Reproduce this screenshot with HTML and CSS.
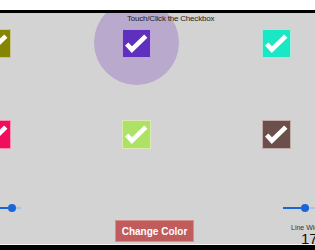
FILE: index.html
```html
<!DOCTYPE html>
<html lang="en">
<head>
    <meta charset="UTF-8">
    <title>Checkbox</title>
    <link rel="stylesheet" href="styles.css">
</head>
<body>
    <div class="topbar"></div>
    <div class="stage">
        <div class="ripple"></div>
        <p class="title">Touch/Click the Checkbox</p>

        <div class="row first">
            <div class="cell"><div class="box olive"><svg viewBox="0 0 29 29"><polyline points="4,15 9.5,21 24.5,6.5"/></svg></div></div>
            <div class="cell"><div class="box purple"><svg viewBox="0 0 29 29"><polyline points="4,15 9.5,21 24.5,6.5"/></svg></div></div>
            <div class="cell"><div class="box teal"><svg viewBox="0 0 29 29"><polyline points="4,15 9.5,21 24.5,6.5"/></svg></div></div>
        </div>

        <div class="row second">
            <div class="cell"><div class="box pink"><svg viewBox="0 0 29 29"><polyline points="4,15 9.5,21 24.5,6.5"/></svg></div></div>
            <div class="cell"><div class="box lime"><svg viewBox="0 0 29 29"><polyline points="4,15 9.5,21 24.5,6.5"/></svg></div></div>
            <div class="cell"><div class="box brown"><svg viewBox="0 0 29 29"><polyline points="4,15 9.5,21 24.5,6.5"/></svg></div></div>
        </div>

        <div class="sliders">
            <div class="slider left">
                <div class="fill"></div>
                <div class="thumb"></div>
                <div class="rest"></div>
            </div>
            <div class="slider right">
                <div class="fill"></div>
                <div class="thumb"></div>
                <div class="rest"></div>
            </div>
        </div>

        <div class="bottom">
            <button id="changeColor">Change Color</button>
            <div class="width-label">
                <span class="small">Line Width</span>
                <span class="value">17</span>
            </div>
        </div>
    </div>
    <div class="footer"></div>
</body>
</html>
```

FILE: styles.css
```css
body {
    margin: 0;
    width: 315px;
    height: 250px;
    overflow: hidden;
    background-color: white;
    font-family: "Liberation Sans", Arial, sans-serif;
}

.topbar {
    height: 10px;
    background-color: white;
    border-bottom: 3px solid black;
}

.stage {
    position: relative;
    height: 231px;
    background-color: #d3d3d3;
    overflow: hidden;
    border-bottom: 1px solid #f2f2f2;
}

.ripple {
    position: absolute;
    left: 94px;
    top: -13px;
    width: 85px;
    height: 85px;
    border-radius: 50%;
    background-color: #b9a9cc;
}

.title {
    position: relative;
    margin: 1px 0 0 127px;
    font-size: 8px;
    line-height: 9px;
    color: #222;
    letter-spacing: -0.2px;
    white-space: nowrap;
}

.row {
    position: relative;
    display: flex;
    margin-left: -74px;
}

.row.first { margin-top: 6px; }
.row.second { margin-top: 62px; }

.cell {
    flex: 0 0 140px;
    display: flex;
    justify-content: center;
}

.box {
    width: 29px;
    height: 29px;
    box-sizing: border-box;
    border: 1px solid rgba(255, 235, 235, 0.6);
}

.box svg {
    display: block;
    width: 27px;
    height: 27px;
}

.box polyline {
    fill: none;
    stroke: white;
    stroke-width: 5;
    stroke-linejoin: miter;
}

.olive { background-color: #858500; }
.purple { background-color: #5f2fbe; }
.teal { background-color: #1ae8c4; }
.pink { background-color: #f00d5e; }
.lime { background-color: #ade264; }
.brown { background-color: #6b4f4a; }

.sliders {
    display: flex;
    margin-top: 55px;
    height: 8px;
}

.slider {
    display: flex;
    flex-shrink: 0;
    align-items: center;
    height: 8px;
}

.slider.left { margin-left: -10px; }
.slider.right { margin-left: 262px; }

.slider .fill,
.slider .rest {
    flex-shrink: 0;
    height: 2px;
}

.slider .fill { background-color: #1a66d8; }
.slider .rest { background-color: #a8c4e8; }

.slider .thumb {
    flex-shrink: 0;
    width: 8px;
    height: 8px;
    border-radius: 50%;
    background-color: #1a66d8;
}

.slider.left .fill { width: 18px; }
.slider.left .rest { width: 5px; }
.slider.right .fill { width: 18px; }
.slider.right .rest { width: 20px; }

.bottom {
    display: flex;
    align-items: flex-start;
    margin-top: 8px;
}

button {
    flex-shrink: 0;
    margin-left: 115px;
    width: 79px;
    height: 22px;
    padding: 0;
    border: 1px solid #d98c8c;
    background-color: #c05c5c;
    color: white;
    font-family: "Liberation Sans", Arial, sans-serif;
    font-weight: bold;
    font-size: 10px;
    white-space: nowrap;
    cursor: pointer;
}

.width-label {
    display: flex;
    flex-shrink: 0;
    flex-direction: column;
    margin-left: 97px;
    margin-top: 4px;
    white-space: nowrap;
}

.width-label .small {
    font-size: 7px;
    line-height: 8px;
    color: #333;
}

.width-label .value {
    margin-left: 10px;
    font-size: 15px;
    line-height: 14px;
    color: #111;
}

.footer {
    height: 5px;
    background-color: black;
}
```
